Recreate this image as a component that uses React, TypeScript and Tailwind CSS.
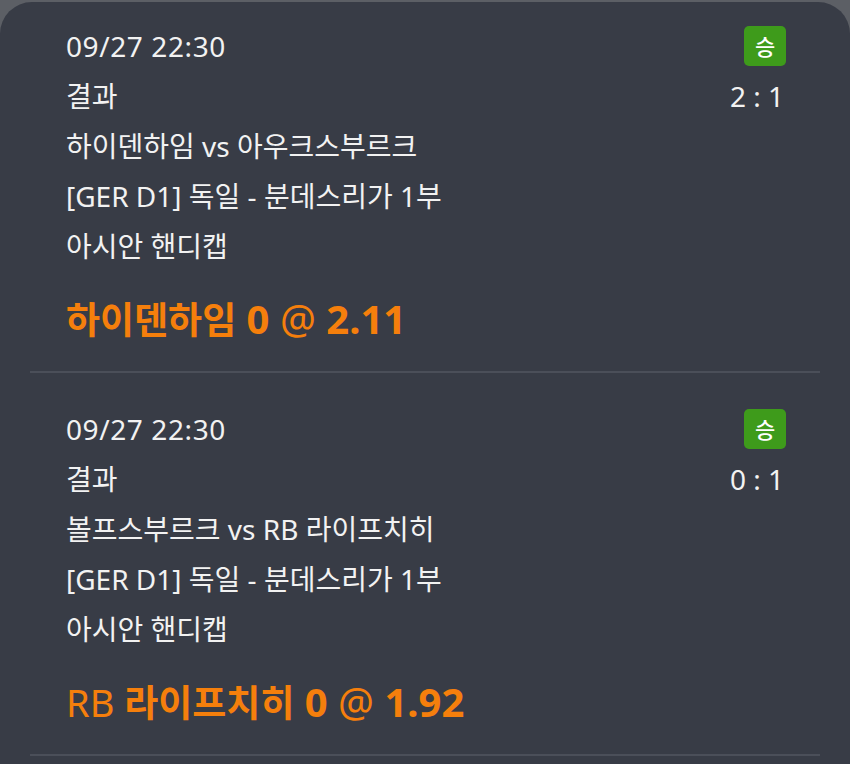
type Part = { text: string; cls: string };

type Bet = {
  time: string;
  score: string;
  match: string;
  league: string;
  market: string;
  pick: Part[];
};

// the odds line mixes a bold Korean face with a larger latin face
const ko = "text-[37px] font-bold";
const num = "text-[40px] font-bold";
const thin = "text-[40px] font-normal";

const bets: Bet[] = [
  {
    time: "09/27 22:30",
    score: "2 : 1",
    match: "하이덴하임 vs 아우크스부르크",
    league: "[GER D1] 독일 - 분데스리가 1부",
    market: "아시안 핸디캡",
    pick: [
      { text: "하이덴하임", cls: ko },
      { text: " 0 ", cls: num },
      { text: "@", cls: thin },
      { text: " 2.11", cls: num },
    ],
  },
  {
    time: "09/27 22:30",
    score: "0 : 1",
    match: "볼프스부르크 vs RB 라이프치히",
    league: "[GER D1] 독일 - 분데스리가 1부",
    market: "아시안 핸디캡",
    pick: [
      { text: "RB ", cls: "text-[38px] font-normal" },
      { text: "라이프치히", cls: ko },
      { text: " 0 ", cls: num },
      { text: "@", cls: thin },
      { text: " 1.92", cls: num },
    ],
  },
];

function BetCard({ bet, first }: { bet: Bet; first: boolean }) {
  return (
    <div
      className={`border-b-2 border-[#4b4f59] pl-[36px] pr-[34px] pb-[26px] ${
        first ? "pt-[19px]" : "pt-[31px]"
      }`}
    >
      <div className="flex h-[50px] items-center justify-between">
        <span className="tracking-[0.6px]">{bet.time}</span>
        <span className="flex h-[40px] w-[42px] items-center justify-center rounded-[5px] bg-[#3e9b1b] text-[22px] font-medium leading-none text-white">
          승
        </span>
      </div>
      <div className="flex h-[50px] items-center justify-between">
        <span>결과</span>
        <span className="pr-[2px]">{bet.score}</span>
      </div>
      <div className="flex h-[50px] items-center">{bet.match}</div>
      <div className="flex h-[50px] items-center">{bet.league}</div>
      <div className="flex h-[50px] items-center">{bet.market}</div>
      <div className="mt-[24px] flex h-[50px] items-baseline text-[#f57f0c]">
        {bet.pick.map((p, i) => (
          <span key={i} className={`whitespace-pre leading-[48px] ${p.cls}`}>
            {p.text}
          </span>
        ))}
      </div>
    </div>
  );
}

export default function App() {
  return (
    <div
      className="h-[764px] w-[850px] overflow-hidden bg-[#5c5f65] pt-[2px]"
      style={{ fontFamily: '"Noto Sans", "Noto Sans CJK KR", sans-serif' }}
    >
      <div className="h-full rounded-t-[32px] bg-[#383c46] px-[30px] text-[28px] leading-[50px] text-[#f2f2f2]">
        {bets.map((bet, i) => (
          <BetCard key={i} bet={bet} first={i === 0} />
        ))}
      </div>
    </div>
  );
}
